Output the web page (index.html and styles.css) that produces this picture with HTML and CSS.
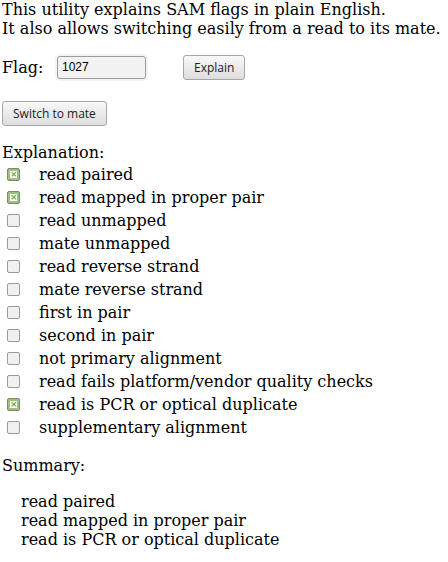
FILE: index.html
```html
<!DOCTYPE html>
<html>
<head>
<meta charset="utf-8">
<title>SAM flags</title>
<link rel="stylesheet" href="styles.css">
</head>
<body>
<p class="intro">This utility explains SAM flags in plain English.<br>It also allows switching easily from a read to its mate.</p>
<div class="flag-row">
  <span class="flag-label">Flag:</span>
  <span class="input">1027</span>
  <span class="btn btn-explain">Explain</span>
</div>
<div class="switch-row">
  <span class="btn">Switch to mate</span>
</div>
<div class="heading">Explanation:</div>
<div class="flags">
  <div class="row"><span class="cb on"></span><span>read paired</span></div>
  <div class="row"><span class="cb on"></span><span>read mapped in proper pair</span></div>
  <div class="row"><span class="cb"></span><span>read unmapped</span></div>
  <div class="row"><span class="cb"></span><span>mate unmapped</span></div>
  <div class="row"><span class="cb"></span><span>read reverse strand</span></div>
  <div class="row"><span class="cb"></span><span>mate reverse strand</span></div>
  <div class="row"><span class="cb"></span><span>first in pair</span></div>
  <div class="row"><span class="cb"></span><span>second in pair</span></div>
  <div class="row"><span class="cb"></span><span>not primary alignment</span></div>
  <div class="row"><span class="cb"></span><span>read fails platform/vendor quality checks</span></div>
  <div class="row"><span class="cb on"></span><span>read is PCR or optical duplicate</span></div>
  <div class="row"><span class="cb"></span><span>supplementary alignment</span></div>
</div>
<div class="heading summary-head">Summary:</div>
<div class="summary">
  <div>read paired</div>
  <div>read mapped in proper pair</div>
  <div>read is PCR or optical duplicate</div>
</div>
</body>
</html>
```
FILE: styles.css
```css
html, body {
  margin: 0;
  background: #fff;
}
body {
  padding: 0 2px;
  font-family: "DejaVu Serif", serif;
  font-size: 16px;
  line-height: 19px;
  color: #000;
}
.intro {
  margin: 0;
}
.flag-row {
  display: flex;
  align-items: center;
  margin-top: 17px;
  height: 25px;
}
.flag-label {
  width: 55px;
}
.input {
  box-sizing: border-box;
  width: 89px;
  height: 23px;
  border: 1px solid #9a9a9a;
  border-radius: 3px;
  background: #f2f2f2;
  box-shadow: 0 0 0 2px #f4f4f4;
  font-family: "Liberation Sans", Arial, sans-serif;
  font-size: 12px;
  line-height: 21px;
  padding-left: 4px;
}
.btn {
  box-sizing: border-box;
  display: inline-flex;
  align-items: center;
  height: 25px;
  padding: 0 10px;
  border: 1px solid #a6a6a6;
  border-radius: 3px;
  background: linear-gradient(#f8f8f8, #dddddd);
  font-family: "Open Sans", sans-serif;
  font-size: 12px;
  color: #222;
}
.btn-explain {
  margin-left: 37px;
}
.switch-row {
  margin-top: 21px;
  height: 25px;
  display: flex;
}
.heading {
  margin-top: 17px;
}
.flags {
  display: flex;
  flex-direction: column;
  margin-top: 1px;
}
.row {
  display: flex;
  align-items: center;
  height: 23px;
}
.cb {
  box-sizing: border-box;
  width: 13px;
  height: 13px;
  margin: 0 19px 0 5px;
  border: 1px solid #9a9a9a;
  border-radius: 2px;
  background: #f0f0f0;
  position: relative;
}
.cb.on {
  border-color: #7c8a70;
  background: #9fbf7c;
}
.cb.on::after {
  content: "×";
  position: absolute;
  left: 2px;
  top: 2px;
  width: 7px;
  height: 7px;
  background: #fff;
  color: #7a9a5c;
  font-family: "DejaVu Sans", sans-serif;
  font-size: 9px;
  line-height: 7px;
  text-align: center;
  font-weight: bold;
}
.summary-head {
  margin-top: 17px;
}
.summary {
  margin-top: 17px;
  padding-left: 19px;
}
```
